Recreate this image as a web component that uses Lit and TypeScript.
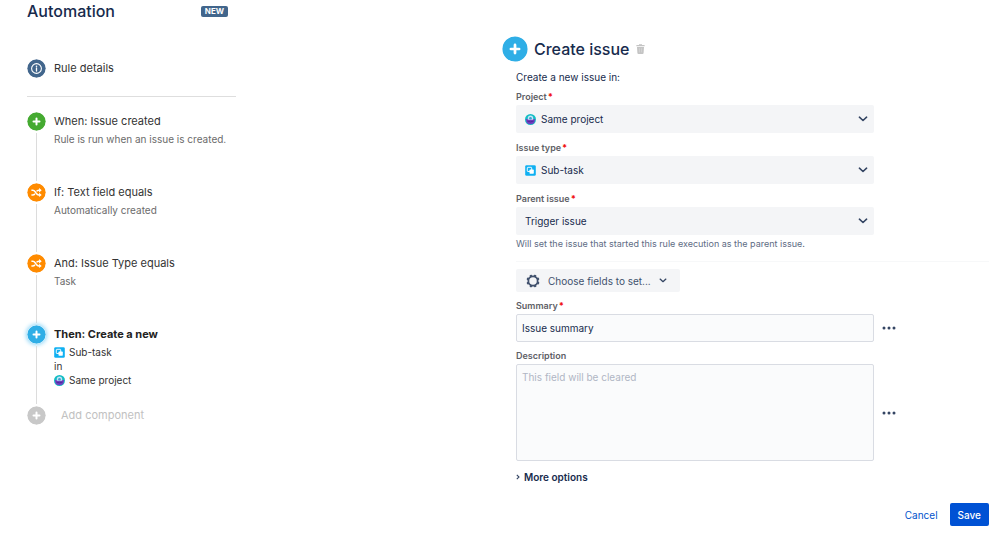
import { LitElement, html, css, svg, nothing, TemplateResult } from "lit";
import { customElement } from "lit/decorators.js";

type Tone = "slate" | "green" | "orange" | "blue" | "grey";

const plus = svg`<path d="M9.5 6.5v6M6.5 9.5h6" stroke="#fff" stroke-width="2" stroke-linecap="round" />`;

const shuffle = svg`
  <g fill="none" stroke="#fff" stroke-width="1.5">
    <path d="M4.400 7.200h1.300c1.200 0 1.800.6 2.500 1.600l1 1.500c.7 1 1.300 1.600 2.500 1.600h1" />
    <path d="M4.400 11.900h1.300c1 0 1.600-.4 2.200-1.200M9.500 8.400c.6-.8 1.200-1.200 2.200-1.200h1" />
  </g>
  <path d="M12.100 5 14.700 7.200l-2.600 2.200zM12.100 9.700l2.600 2.200-2.600 2.200z" fill="#fff" />`;

const info = svg`
  <circle cx="9.500" cy="9.500" r="4.900" fill="none" stroke="#fff" stroke-width="1.100" />
  <circle cx="9.500" cy="7.300" r=".8" fill="#fff" />
  <path d="M9.500 8.900v3.100" stroke="#fff" stroke-width="1.300" stroke-linecap="round" />`;

const disc = (tone: Tone, glyph: unknown) => html`
  <svg class="disc ${tone}" viewBox="0 0 19 19" aria-hidden="true">
    <circle class="fill" cx="9.500" cy="9.500" r="9.200" />
    ${glyph}
  </svg>`;

const subtaskIcon = html`
  <svg class="mini" viewBox="0 0 11 11" aria-hidden="true">
    <rect x=".2" y=".2" width="10.600" height="10.600" rx="1.400" fill="#0fb0f2" />
    <rect x="2.300" y="2.300" width="4.400" height="4.200" rx=".6" fill="none" stroke="#fff" stroke-width=".9" />
    <rect x="4.500" y="4.600" width="4.300" height="4.100" rx=".6" fill="#fff" />
  </svg>`;

const projectIcon = html`
  <svg class="mini" viewBox="0 0 11 11" aria-hidden="true">
    <circle cx="5.500" cy="5.500" r="5.500" fill="#14bdc4" />
    <path d="M1.100 5h8.800v1.200A4.400 4.300 0 0 1 5.500 10.300 4.400 4.300 0 0 1 1.100 6.200z" fill="#6f3fc0" />
    <path d="M2.800 5.700V4.100a2.700 2.700 0 0 1 5.400 0v1.600z" fill="#c3e6f7" />
    <circle cx="5.500" cy="4.300" r="1.300" fill="#3f9fd0" />
    <path d="M2.400 7.100q3.100 1.500 6.200 0" fill="none" stroke="#4a2596" stroke-width=".9" />
  </svg>`;

const chevron = html`
  <svg class="chevron" viewBox="0 0 10 6" aria-hidden="true">
    <path d="M1.400 1.200 5 4.500l3.600-3.300" fill="none" stroke="#344563" stroke-width="1.600" stroke-linecap="round" stroke-linejoin="round" />
  </svg>`;

const gear = html`
  <svg class="gear" viewBox="0 0 14 14" aria-hidden="true">
    <circle cx="7" cy="7" r="4.600" fill="none" stroke="#42526e" stroke-width="1.700" />
    <g fill="#42526e">
      ${[0, 45, 90, 135, 180, 225, 270, 315].map(
        (a) => svg`<path d="M5.400 2.600 5.900.7Q7 0 8.100.7l.5 1.900z" transform="rotate(${a + 22} 7 7)" />`
      )}
    </g>
  </svg>`;

const dots = html`
  <svg class="dots" viewBox="0 0 14 4" aria-hidden="true">
    <g fill="#344563">
      <circle cx="2" cy="2" r="1.500" /><circle cx="7" cy="2" r="1.500" /><circle cx="12" cy="2" r="1.500" />
    </g>
  </svg>`;

const trash = html`
  <svg class="trash" viewBox="0 0 9 10" aria-hidden="true">
    <path d="M3 .9V.2h3v.7h2.600v1.300H.4V.9zM1 2.900h7l-.4 6.100q-.1.900-1 .9H2.400q-.9 0-1-.9z" fill="#c4c4c4" />
    <path d="M3.400 4.200v4.200M5.600 4.200v4.200" stroke="#dcdcdc" stroke-width=".6" />
  </svg>`;

interface Step {
  tone: Tone;
  glyph: unknown;
  title: string;
  note?: string;
  current?: boolean;
}

const steps: Step[] = [
  { tone: "green", glyph: plus, title: "When: Issue created", note: "Rule is run when an issue is created." },
  { tone: "orange", glyph: shuffle, title: "If: Text field equals", note: "Automatically created" },
  { tone: "orange", glyph: shuffle, title: "And: Issue Type equals", note: "Task" },
  { tone: "blue", glyph: plus, title: "Then: Create a new", current: true },
];

const base = css`
  :host {
    display: block;
    font-family: Inter, "Liberation Sans", sans-serif;
    font-size: 10px;
    color: #172b4d;
  }
  * { box-sizing: border-box; }
  h1, h2, p, ol { margin: 0; padding: 0; }
  h1, h2 { font-size: 16px; line-height: 22px; font-weight: 500; }
  button, input, select, textarea { font: inherit; color: inherit; margin: 0; }
  button { border: 0; padding: 0; background: none; cursor: pointer; text-align: left; }
  svg { display: block; flex: none; }
  .disc { width: 19px; height: 19px; border-radius: 50%; }
  .slate .fill { fill: #42668c; }
  .green .fill { fill: #45aa31; }
  .orange .fill { fill: #ff8b00; }
  .blue .fill { fill: #2faee6; }
  .grey .fill { fill: #c8c8c8; }
  .mini { width: 11px; height: 11px; }
`;

@customElement("rule-sidebar")
export class RuleSidebar extends LitElement {
  static styles = [
    base,
    css`
      :host { max-width: 209px; }
      header { display: flex; align-items: center; justify-content: space-between; padding-right: 8px; }
      .badge { width: 27px; height: 11px; border-radius: 2px; background: #42668c; color: #fff; font-size: 8px; line-height: 11px; font-weight: 700; text-align: center; }
      .details { display: flex; align-items: center; gap: 8px; width: 100%; margin-top: 37px; padding-bottom: 18px; border-bottom: 1px solid #dedede; color: #333; font-size: 11px; line-height: 19px; }
      ol { list-style: none; margin-top: 15px; }
      .step { display: grid; grid-template-columns: 19px 1fr; column-gap: 8px; color: #333; }
      .rail { display: flex; flex-direction: column; align-items: center; gap: 2px; }
      .rail::after { content: ""; flex: 1; width: 1px; margin-bottom: 2px; background: #dcdcdc; }
      .body { padding-bottom: 37px; }
      .title { font-size: 11px; line-height: 19px; }
      .note { margin-top: 1px; color: #6b6b6b; line-height: 14px; }
      .current .body { padding-bottom: 19px; }
      .current .title { font-weight: 700; margin-bottom: 1px; color: #222; }
      .current .disc { box-shadow: 0 0 4px 1px #8fd6f7; }
      .line { display: flex; align-items: center; gap: 4px; line-height: 14px; }
      .add { display: flex; align-items: center; gap: 15px; font-size: 11px; line-height: 19px; color: #c1c1c1; }
    `,
  ];

  render() {
    return html`
      <header><h1>Automation</h1><span class="badge">NEW</span></header>
      <button class="details">${disc("slate", info)}Rule details</button>
      <ol>
        ${steps.map(
          (s) => html`
            <li class="step ${s.current ? "current" : ""}">
              <div class="rail">${disc(s.tone, s.glyph)}</div>
              <div class="body">
                <p class="title">${s.title}</p>
                ${s.note ? html`<p class="note">${s.note}</p>` : nothing}
                ${s.current
                  ? html`
                      <p class="line">${subtaskIcon}Sub-task</p>
                      <p class="line">in</p>
                      <p class="line">${projectIcon}Same project</p>`
                  : nothing}
              </div>
            </li>`
        )}
      </ol>
      <button class="add">${disc("grey", plus)}Add component</button>
    `;
  }
}

@customElement("issue-form")
export class IssueForm extends LitElement {
  static styles = [
    base,
    css`
      header { display: flex; align-items: center; gap: 6px; }
      header .disc { width: 26px; height: 26px; }
      .trash { width: 9px; height: 10px; }
      .content { padding-left: 14px; }
      .intro { margin-top: 7px; line-height: 16px; }
      .fields { display: grid; gap: 7px; margin-top: 4px; }
      .field, .row > .control { width: 100%; max-width: 358px; }
      label { display: block; font-size: 9px; line-height: 16px; font-weight: 600; color: #5e6066; }
      .required { color: #f01010; font-weight: 800; margin-left: 1px; }
      .picker { position: relative; }
      .picker select { display: block; width: 100%; height: 28px; padding: 0 24px 0 9px; border: 0; border-radius: 2px; background: #f4f5f7; appearance: none; }
      .picker.with-icon select { padding-left: 25px; }
      .picker .mini { position: absolute; left: 9px; top: 9px; pointer-events: none; }
      .picker .chevron { position: absolute; right: 6px; top: 11px; pointer-events: none; }
      .chevron { width: 10px; height: 6px; }
      .hint { font-size: 9px; line-height: 18px; color: #5e6c84; }
      .extra { margin-top: 8px; padding-top: 7px; border-top: 1px solid #f7f8f9; display: grid; gap: 6px; }
      .choose { display: flex; align-items: center; justify-self: start; min-width: 164px; height: 23px; padding: 0 13px 0 10px; border-radius: 2px; background: #f4f5f7; color: #42526e; white-space: nowrap; }
      .choose .chevron { width: 8px; height: 5px; margin-left: auto; }
      .gear { width: 14px; height: 14px; margin-right: 8px; }
      .row { display: flex; align-items: center; gap: 8px; }
      .dots { width: 14px; height: 4px; }
      .control { display: block; border: 1px solid #d9dce3; border-radius: 2px; background: #fafbfc; padding: 0 5px; }
      input.control { height: 28px; }
      textarea.control { height: 97px; padding: 4px 5px; line-height: 16px; resize: none; }
      textarea::placeholder { color: #b0b6c4; opacity: 1; }
      .more { display: flex; align-items: center; gap: 4px; margin-top: 8px; line-height: 16px; font-weight: 600; }
      .caret { width: 4px; height: 6px; }
      footer { display: flex; justify-content: flex-end; align-items: center; gap: 12px; margin-top: 18px; }
      .cancel { color: #0052cc; }
      .save { height: 23px; padding: 0 8px; border-radius: 2px; background: #0052d4; color: #fff; font-weight: 500; }
    `,
  ];

  private picker(id: string, label: string, value: string, icon?: TemplateResult) {
    return html`
      <div class="field">
        <label for=${id}>${label}<span class="required">*</span></label>
        <div class="picker ${icon ? "with-icon" : ""}">
          ${icon ?? nothing}
          <select id=${id}><option>${value}</option></select>
          ${chevron}
        </div>
      </div>`;
  }

  render() {
    return html`
      <header>
        ${disc("blue", plus)}
        <h2>Create issue</h2>
        <button class="remove" aria-label="Delete component">${trash}</button>
      </header>
      <div class="content">
        <p class="intro">Create a new issue in:</p>
        <div class="fields">
          ${this.picker("project", "Project", "Same project", projectIcon)}
          ${this.picker("type", "Issue type", "Sub-task", subtaskIcon)}
          ${this.picker("parent", "Parent issue", "Trigger issue")}
        </div>
        <p class="hint">Will set the issue that started this rule execution as the parent issue.</p>
        <div class="extra">
          <button class="choose">${gear}Choose fields to set...${chevron}</button>
          <div>
            <label for="summary">Summary<span class="required">*</span></label>
            <div class="row">
              <input class="control" id="summary" type="text" value="Issue summary" />
              <button aria-label="Summary actions">${dots}</button>
            </div>
          </div>
          <div>
            <label for="description">Description</label>
            <div class="row">
              <textarea class="control" id="description" placeholder="This field will be cleared"></textarea>
              <button aria-label="Description actions">${dots}</button>
            </div>
          </div>
        </div>
        <button class="more">
          <svg class="caret" viewBox="0 0 4 6" aria-hidden="true">
            <path d="M.8.8 3 3 .8 5.200" fill="none" stroke="#344563" stroke-width="1.100" />
          </svg>
          More options
        </button>
        <footer>
          <button class="cancel">Cancel</button>
          <button class="save">Save</button>
        </footer>
      </div>
    `;
  }
}

@customElement("app-root")
export class AppRoot extends LitElement {
  static styles = css`
    :host { display: block; min-height: 100vh; background: #fff; }
    main { display: grid; grid-template-columns: 475fr 487fr; padding: 0 10px 12px 27px; }
    issue-form { padding-top: 36px; }
  `;

  render() {
    return html`<main><rule-sidebar></rule-sidebar><issue-form></issue-form></main>`;
  }
}
